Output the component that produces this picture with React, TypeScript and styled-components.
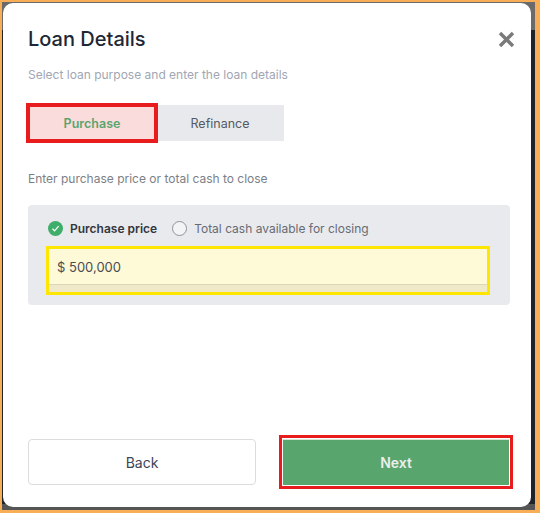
import React, { useState } from "react";
import styled, { createGlobalStyle } from "styled-components";

const GlobalStyle = createGlobalStyle`
  html, body {
    margin: 0;
    padding: 0;
    background: #f8ae56;
    font-family: "Inter", "Noto Sans", sans-serif;
  }
  * { box-sizing: border-box; }
`;

const Frame = styled.div`
  width: 540px;
  height: 513px;
  padding: 2px 5px 3px 2px;
  background: #f8ae56;
`;

const Backdrop = styled.div`
  height: 100%;
  padding: 1px 4px 3px 1px;
  background: linear-gradient(
    to bottom,
    #6a6a6a 0 28px,
    #1f232a 28px calc(100% - 6px),
    #555555 calc(100% - 6px)
  );
`;

const Modal = styled.div`
  height: 100%;
  background: #ffffff;
  border-radius: 10px;
  padding: 24px 21px 22px 25px;
  display: flex;
  flex-direction: column;
`;

const Header = styled.div`
  display: flex;
  align-items: center;
  justify-content: space-between;
  height: 24px;
`;

const Title = styled.h2`
  margin: 0;
  font-size: 20px;
  line-height: 24px;
  font-weight: 500;
  color: #1e2736;
`;

const CloseButton = styled.button`
  border: 0;
  padding: 0;
  margin-right: -5px;
  background: none;
  width: 17px;
  height: 17px;
  display: flex;
  cursor: pointer;
`;

const Hint = styled.p<{ $muted?: boolean }>`
  margin: ${(p) => (p.$muted ? "16px 0 0" : "30px 0 0")};
  font-size: 12px;
  line-height: 16px;
  color: ${(p) => (p.$muted ? "#a0a6b3" : "#7b7f87")};
`;

const Tabs = styled.div`
  margin-top: 22px;
  display: flex;
  width: 256px;
  height: 36px;
  background: #e8e9ed;
`;

const Tab = styled.button<{ $active?: boolean }>`
  flex: 1;
  border: 0;
  font-family: inherit;
  font-size: 12.5px;
  cursor: pointer;
  font-weight: ${(p) => (p.$active ? 600 : 400)};
  color: ${(p) => (p.$active ? "#5aa56e" : "#555a62")};
  background: ${(p) => (p.$active ? "#fbdcdc" : "transparent")};
  outline: ${(p) => (p.$active ? "4px solid #e81c1c" : "none")};
  outline-offset: -2px;
`;

const Panel = styled.div`
  margin-top: 18px;
  background: #e9eaee;
  border-radius: 4px;
  padding: 15px 20px 10px 18px;
`;

const RadioRow = styled.div`
  display: flex;
  align-items: center;
  height: 16px;
  padding-left: 2px;
`;

const RadioOption = styled.label<{ $checked?: boolean }>`
  display: flex;
  align-items: center;
  gap: 7px;
  margin-right: 15px;
  font-size: 12px;
  cursor: pointer;
  font-weight: ${(p) => (p.$checked ? 600 : 400)};
  color: ${(p) => (p.$checked ? "#33363c" : "#676b73")};
`;

const RadioDot = styled.span<{ $checked?: boolean }>`
  width: 15px;
  height: 15px;
  border-radius: 50%;
  display: flex;
  align-items: center;
  justify-content: center;
  background: ${(p) => (p.$checked ? "#3fae6a" : "#f3f4f6")};
  border: ${(p) => (p.$checked ? "none" : "1.3px solid #8d929c")};
`;

const InputFrame = styled.div`
  margin-top: 10px;
  border: 3px solid #ffe600;
  background: #efe9c9;
  padding-bottom: 7px;
`;

const AmountInput = styled.input`
  width: 100%;
  height: 36px;
  border: 0;
  border-bottom: 1px solid #dcd6b8;
  background: #fefad8;
  padding: 0 8px;
  font-family: inherit;
  font-size: 13px;
  color: #4a4d52;
  outline: none;
`;

const Footer = styled.div`
  margin-top: auto;
  display: flex;
  gap: 27px;
`;

const ActionButton = styled.button<{ $primary?: boolean }>`
  height: 46px;
  width: ${(p) => (p.$primary ? "226px" : "228px")};
  border-radius: ${(p) => (p.$primary ? "0" : "4px")};
  font-family: inherit;
  font-size: 14px;
  cursor: pointer;
  font-weight: ${(p) => (p.$primary ? 600 : 400)};
  color: ${(p) => (p.$primary ? "#eceee9" : "#3e4555")};
  background: ${(p) => (p.$primary ? "#58a56e" : "#ffffff")};
  border: ${(p) => (p.$primary ? "0" : "1px solid #dcdcdc")};
  border-top: ${(p) => (p.$primary ? "1px solid #d8e6d8" : "1px solid #dcdcdc")};
  outline: ${(p) => (p.$primary ? "3px solid #e81c1c" : "none")};
  outline-offset: 1px;
`;

function Check() {
  return (
    <svg width="9" height="9" viewBox="0 0 9 9">
      <path d="M1.5 4.8 L3.6 6.8 L7.6 2.2" fill="none" stroke="#fff" strokeWidth="1.2" />
    </svg>
  );
}

export default function App() {
  const [purpose, setPurpose] = useState("purchase");
  const [mode, setMode] = useState("price");
  const [amount, setAmount] = useState("500,000");

  return (
    <>
      <GlobalStyle />
      <Frame>
        <Backdrop>
          <Modal>
            <Header>
              <Title>Loan Details</Title>
              <CloseButton aria-label="Close">
                <svg width="17" height="17" viewBox="0 0 17 17">
                  <path d="M2 2 L15 15 M15 2 L2 15" stroke="#7a7a7a" strokeWidth="3.4" />
                </svg>
              </CloseButton>
            </Header>
            <Hint $muted>Select loan purpose and enter the loan details</Hint>
            <Tabs>
              <Tab $active={purpose === "purchase"} onClick={() => setPurpose("purchase")}>
                Purchase
              </Tab>
              <Tab $active={purpose === "refinance"} onClick={() => setPurpose("refinance")}>
                Refinance
              </Tab>
            </Tabs>
            <Hint>Enter purchase price or total cash to close</Hint>
            <Panel>
              <RadioRow>
                <RadioOption $checked={mode === "price"} onClick={() => setMode("price")}>
                  <RadioDot $checked={mode === "price"}>{mode === "price" && <Check />}</RadioDot>
                  Purchase price
                </RadioOption>
                <RadioOption $checked={mode === "cash"} onClick={() => setMode("cash")}>
                  <RadioDot $checked={mode === "cash"}>{mode === "cash" && <Check />}</RadioDot>
                  Total cash available for closing
                </RadioOption>
              </RadioRow>
              <InputFrame>
                <AmountInput
                  value={`$ ${amount}`}
                  onChange={(e) => setAmount(e.target.value.replace(/^\$\s?/, ""))}
                />
              </InputFrame>
            </Panel>
            <Footer>
              <ActionButton>Back</ActionButton>
              <ActionButton $primary>Next</ActionButton>
            </Footer>
          </Modal>
        </Backdrop>
      </Frame>
    </>
  );
}
